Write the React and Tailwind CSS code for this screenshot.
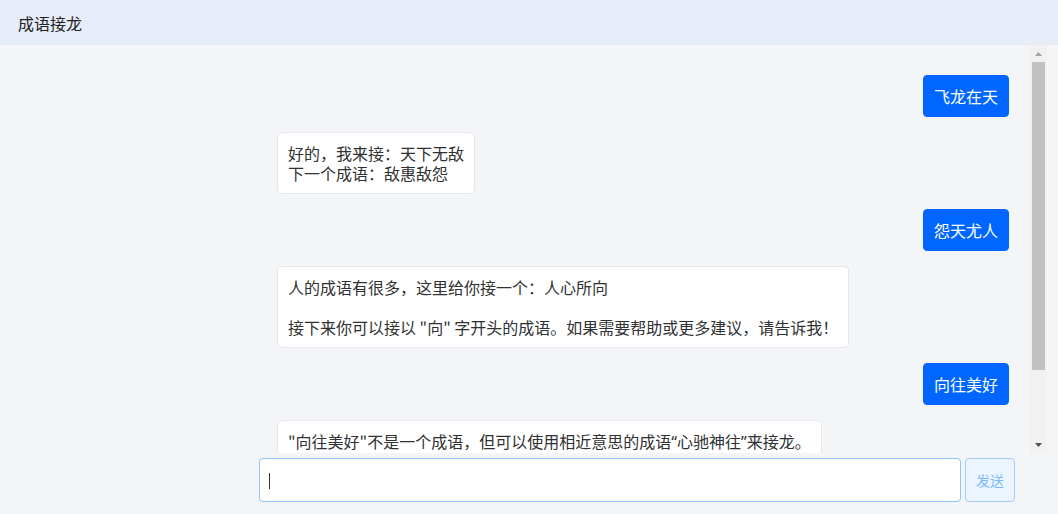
import { useState } from 'react';

const Q = ({ children }) => (
  <span style={{ fontFamily: '"Noto Sans", sans-serif' }}>{children}</span>
);

const messages = [
  { role: 'user', text: '飞龙在天' },
  { role: 'bot', text: '好的，我来接：天下无敌\n下一个成语：敌惠敌怨' },
  { role: 'user', text: '怨天尤人' },
  {
    role: 'bot',
    text: '人的成语有很多，这里给你接一个：人心所向\n\n接下来你可以接以 "向" 字开头的成语。如果需要帮助或更多建议，请告诉我！',
  },
  { role: 'user', text: '向往美好' },
  {
    role: 'bot',
    text: (
      <>
        "向往美好"不是一个成语，但可以使用相近意思的成语<Q>“</Q>心驰神往<Q>”</Q>来接龙。
        {'\n\n'}接下来请以 "往" 字开头接龙。
      </>
    ),
  },
];

const Scrollbar = () => (
  <div className="w-[17px] shrink-0 h-full flex flex-col bg-[#f1f1f1]">
    <div className="h-[17px] flex items-center justify-center">
      <svg width="7" height="4" viewBox="0 0 7 4">
        <path d="M3.5 0 L7 4 L0 4 Z" fill="#a3a3a3" />
      </svg>
    </div>
    <div className="flex-1 flex flex-col px-[2px]">
      <div className="h-[308px] bg-[#c1c1c1]" />
    </div>
    <div className="h-[17px] flex items-center justify-center">
      <svg width="7" height="4" viewBox="0 0 7 4">
        <path d="M0 0 L7 0 L3.5 4 Z" fill="#505050" />
      </svg>
    </div>
  </div>
);

const App = () => {
  const [input, setInput] = useState('');

  return (
    <div
      className="h-[514px] flex flex-col bg-[#f4f5f7] text-[#303133] overflow-hidden"
      style={{ fontFamily: '"Noto Sans CJK SC", "Noto Sans", sans-serif' }}
    >
      <header className="h-[45px] shrink-0 flex items-center px-[18px] bg-[#e7edf8] text-[16px] text-[#222]">
        成语接龙
      </header>

      <div className="h-[408px] shrink-0 mr-[11px] flex">
        <div className="flex-1 overflow-hidden">
          <div className="flex flex-col gap-[15px] pt-[30px] pb-[14px] pl-[277px] pr-[21px]">
            {messages.map((m, i) =>
              m.role === 'user' ? (
                <div key={i} className="flex justify-end">
                  <div className="px-[10px] py-[10px] leading-5 text-[16px] text-white bg-[#0066ff] border border-[#0066ff] rounded-[4px] whitespace-pre-wrap">
                    {m.text}
                  </div>
                </div>
              ) : (
                <div key={i} className="flex justify-start">
                  <div className="max-w-[600px] px-[10px] py-[10px] leading-5 text-[16px] bg-white border border-[#e4e7ed] rounded-[4px] whitespace-pre-wrap">
                    {m.text}
                  </div>
                </div>
              )
            )}
          </div>
        </div>
        <Scrollbar />
      </div>

      <div className="flex gap-[4px] pt-[5px] pl-[259px] pr-[43px]">
        <div className="relative flex-1">
          <input
            autoFocus
            value={input}
            onChange={(e) => setInput(e.target.value)}
            className="w-full h-[44px] px-[10px] bg-white border border-[#8cc5ff] rounded-[4px] text-[16px] outline-none caret-transparent"
          />
          {input === '' && (
            <span className="absolute left-[10px] top-[15px] w-px h-[16px] bg-[#333] pointer-events-none" />
          )}
        </div>
        <button className="w-[50px] h-[44px] bg-[#ecf5ff] border border-[#a0cfff] rounded-[4px] text-[14px] text-[#79bbff]">
          发送
        </button>
      </div>
    </div>
  );
};

export default App;
